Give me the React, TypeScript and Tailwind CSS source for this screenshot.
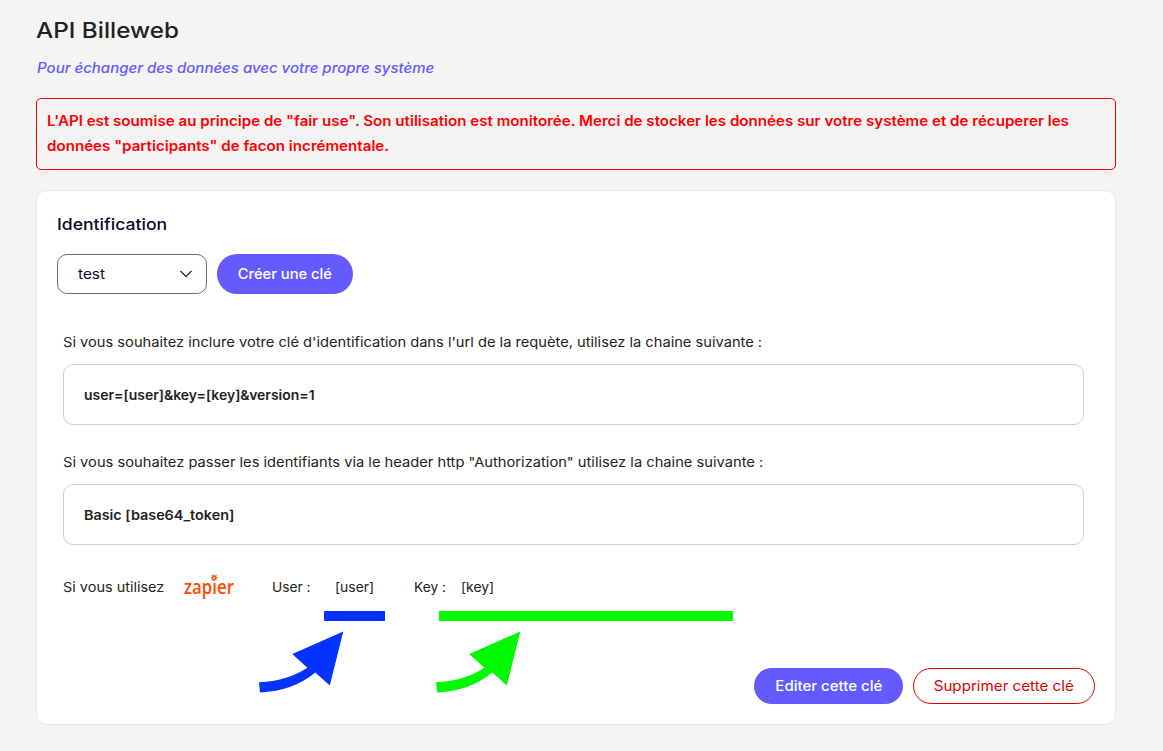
import type { ReactNode } from "react";

function Arrow({ className }: { className: string }) {
  return (
    <svg className={className} width="85" height="62" viewBox="0 0 85 62" fill="currentColor">
      <path d="M84.3 0.5L33.3 23L48.3 36.8Q28 50.3 0 51.2L1 61.5Q34 60 56.3 41.5L70.8 54.5Z" />
    </svg>
  );
}

function ZapierLogo() {
  return (
    <svg className="block h-[30px] w-[54px] overflow-visible" viewBox="0 0 54 30">
      <text
        x="1"
        y="21.5"
        textLength="50"
        lengthAdjust="spacingAndGlyphs"
        fill="#ff4a00"
        className="font-['Open_Sans',sans-serif] text-[20px] font-semibold"
      >
        zapier
      </text>
      <rect x="27.5" y="2" width="7.5" height="7.8" fill="#fff" />
      <g stroke="#ff4a00" strokeWidth="1.3">
        <path d="M31.2 2.4V4.8M31.2 6.6V9M27.9 5.7H30.3M32.1 5.7H34.5M28.9 3.4L30.5 5M31.9 6.4L33.5 8M33.5 3.4L31.9 5M30.5 6.4L28.9 8" />
      </g>
    </svg>
  );
}

function KeyBox({ children }: { children: ReactNode }) {
  return (
    <div className="flex h-[61px] w-[1021px] items-center rounded-[10px] border border-[#cfcfcf] px-5 pt-px text-[13.5px] font-semibold text-[#222]">
      {children}
    </div>
  );
}

export default function App() {
  return (
    <main className="h-[751px] w-[1163px] overflow-hidden bg-[#f4f4f4] pl-9 pr-[47px] pt-[15px] font-[Inter,sans-serif] text-[#212121]">
      <h1 className="h-[30px] origin-left scale-x-[1.103] text-[22px] font-medium leading-[30px]">API Billeweb</h1>
      <p className="mt-3 h-[22px] origin-left scale-x-[1.071] pl-px text-[14px] font-medium italic leading-[22px] text-[#635bff]">
        Pour échanger des données avec votre propre système
      </p>
      <div className="mt-[19px] h-[72px] rounded-[5px] border border-[#f00] px-2.5 pt-[9px] text-[14px] font-semibold leading-[25px] text-[#f00]">
        <p className="w-[980px] origin-left scale-x-[1.08]">
          L'API est soumise au principe de "fair use". Son utilisation est monitorée. Merci de stocker les données sur votre système et de récuperer les données "participants" de facon incrémentale.
        </p>
      </div>

      <section className="mt-5 flex h-[535px] flex-col rounded-[10px] border border-[#e5e5e8] bg-white px-5 pb-5 pt-[21px]">
        <h2 className="h-6 origin-left scale-x-[1.1] text-[16px] font-medium leading-6 text-[#0a0a2e]">Identification</h2>
        <div className="mt-[18px] flex gap-2.5">
          <button className="flex h-10 w-[150px] items-center justify-between rounded-[10px] border border-[#6f6a8a] pl-5 pr-3.5 text-[14px] text-[#0a0a2e]">
            <span className="origin-left scale-x-[1.1] pb-px">test</span>
            <svg width="12" height="8" viewBox="0 0 12 8" fill="none" stroke="#333" strokeWidth="1.4">
              <path d="M0.5 1L6 6.5L11.5 1" />
            </svg>
          </button>
          <button className="flex h-10 w-[136px] items-center justify-center rounded-full bg-[#635bff] pb-px text-[14px] font-medium text-white">
            <span className="scale-x-[1.05]">Créer une clé</span>
          </button>
        </div>

        <div className="ml-[5.5px] mt-[38px] text-[13.5px] text-[#222]">
          <p className="h-5 origin-left scale-x-[1.086] leading-5">
            Si vous souhaitez inclure votre clé d'identification dans l'url de la requète, utilisez la chaine suivante :
          </p>
          <div className="mt-3">
            <KeyBox><span className="origin-left scale-x-[1.035]">user=[user]&amp;key=[key]&amp;version=1</span></KeyBox>
          </div>
          <p className="mt-[27px] h-5 origin-left scale-x-[1.088] leading-5">
            Si vous souhaitez passer les identifiants via le header http "Authorization" utilisez la chaine suivante :
          </p>
          <div className="mt-3">
            <KeyBox><span className="origin-left scale-x-[1.064]">Basic [base64_token]</span></KeyBox>
          </div>
          <div className="mt-[27px] flex h-[30px] items-center whitespace-nowrap">
            <span className="w-[120px] origin-left scale-x-[1.072]">Si vous utilisez</span>
            <ZapierLogo />
            <span className="ml-[35.5px] w-[63px] origin-left scale-x-[1.02]">User :</span>
            <span className="w-[79px] origin-left scale-x-[1.03]">[user]</span>
            <span className="w-[47px] origin-left scale-x-[1.02]">Key :</span>
            <span className="origin-left scale-x-[1.03]">[key]</span>
          </div>
        </div>

        <div className="ml-[202px] mt-[9px] flex">
          <div className="w-[177px]">
            <div className="ml-[65px] h-2.5 w-[61px] bg-[#0433ff]" />
            <Arrow className="mt-2.5 block text-[#0433ff]" />
          </div>
          <div>
            <div className="ml-[3px] h-2.5 w-[294px] bg-[#00f900]" />
            <Arrow className="mt-2.5 block text-[#00f900]" />
          </div>
        </div>
        <div className="-mt-[25px] flex justify-end gap-2.5 text-[14px]">
          <button className="flex h-9 w-[149px] items-center justify-center rounded-full bg-[#635bff] pb-px font-medium text-white">
            <span className="scale-x-[1.073]">Editer cette clé</span>
          </button>
          <button className="flex h-9 w-[182px] items-center justify-center rounded-full border border-[#d80000] pb-px text-[#d80000]">
            <span className="scale-x-[1.082]">Supprimer cette clé</span>
          </button>
        </div>
      </section>
    </main>
  );
}
